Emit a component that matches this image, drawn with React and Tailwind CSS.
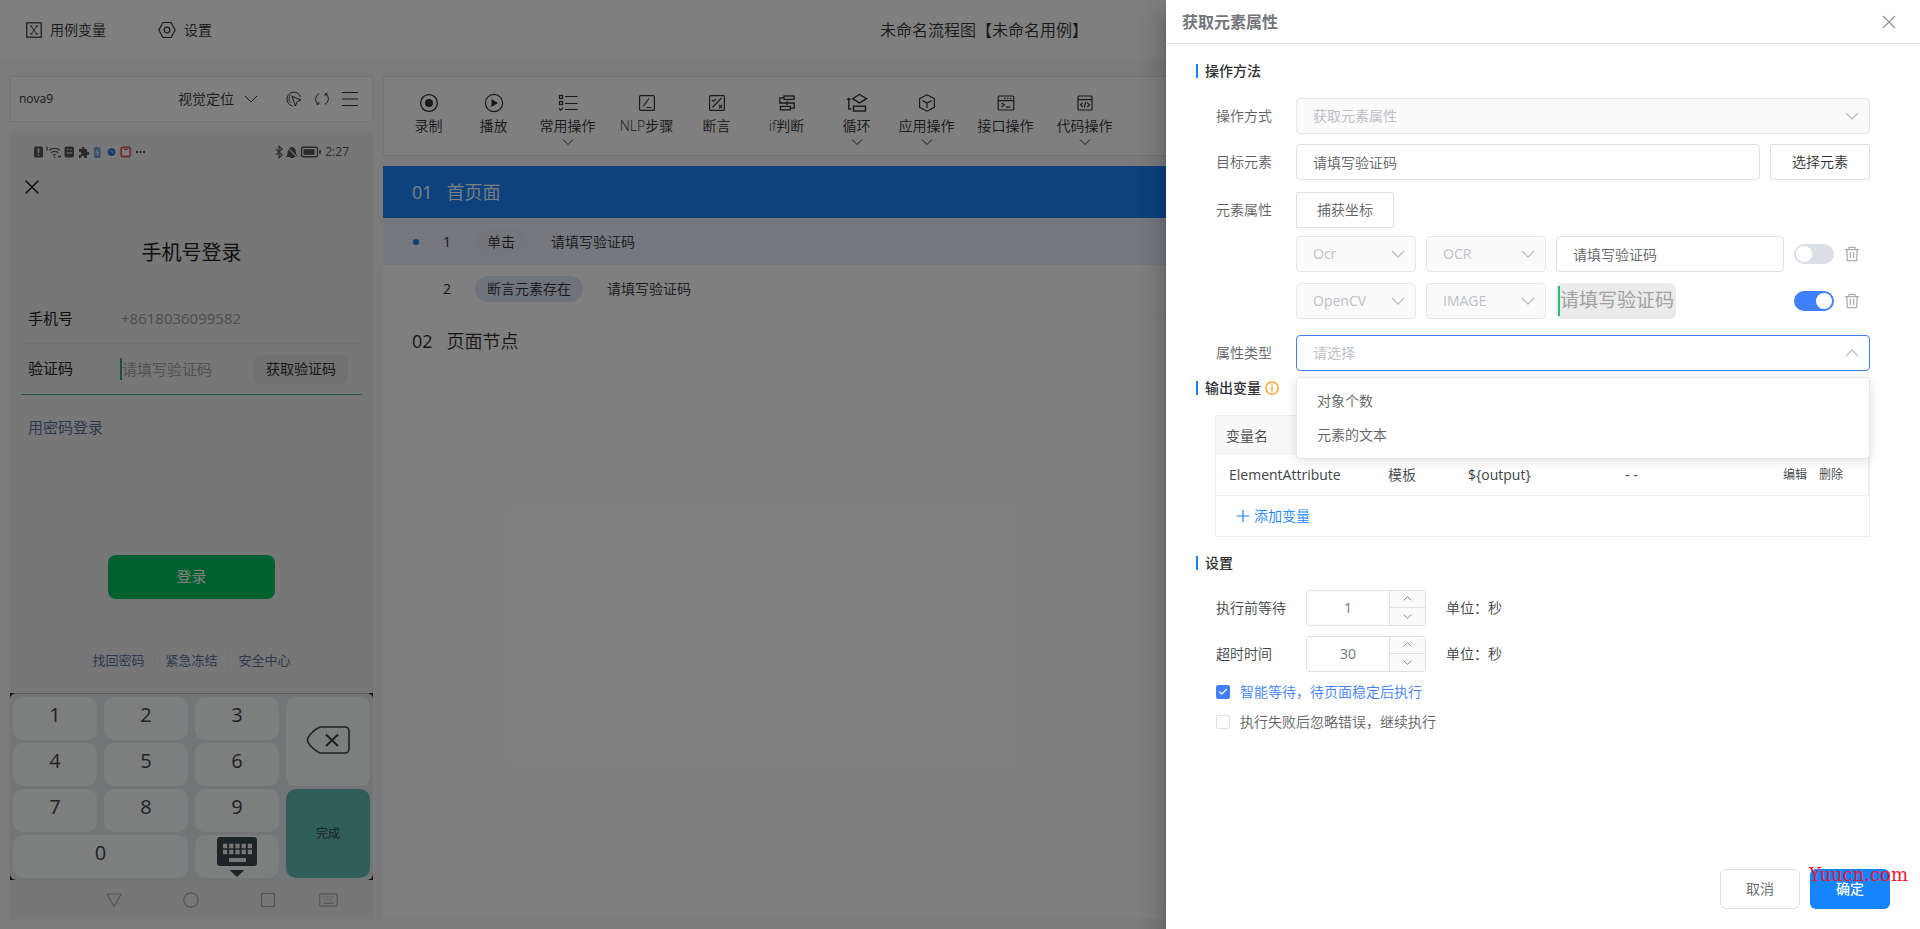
import React from "react";
import { Check } from "lucide-react";

function Svg({ w = 20, h = 20, box, className = "", children, sw = 1.2 }) {
  return (
    <svg
      width={w}
      height={h}
      viewBox={box || `0 0 ${w} ${h}`}
      fill="none"
      stroke="currentColor"
      strokeWidth={sw}
      className={"shrink-0 " + className}
      aria-hidden="true"
    >
      {children}
    </svg>
  );
}

const toolIcons = {
  record: (
    <Svg sw={1.4}>
      <circle cx="10" cy="10" r="8.4" />
      <circle cx="10" cy="10" r="4" fill="currentColor" stroke="none" />
    </Svg>
  ),
  play: (
    <Svg>
      <circle cx="10" cy="10" r="8.6" />
      <path d="M7.5 6v8l6.5-4z" fill="currentColor" stroke="none" />
    </Svg>
  ),
  list: (
    <Svg>
      <rect x="1.5" y="2.5" width="3" height="3" />
      <rect x="1.5" y="8.5" width="3" height="3" />
      <path d="M1 15.5l1.6 1.6L5 14.8M7 3.5h12.5M7 10.5h12.5M7 16.5h12.5" />
    </Svg>
  ),
  nlp: (
    <Svg>
      <rect x="2.6" y="2.6" width="14.8" height="14.8" rx="1" />
      <path d="M6 13.5L12 5.5M9.5 14.5h5" />
    </Svg>
  ),
  assert: (
    <Svg>
      <rect x="2.6" y="2.6" width="14.8" height="14.8" rx="1" />
      <path d="M5.5 14.5L14.5 5M5 6.8l1.6 1.6L9 5.8M12 12l3 3M15 12l-3 3" />
    </Svg>
  ),
  branch: (
    <Svg sw={1.3}>
      <rect x="7" y="3" width="10" height="3.4" />
      <rect x="3.4" y="13.4" width="10" height="3.4" />
      <path d="M7 4.8H2.8v5.2h14.4v5.2h-3.8M10 8v4" />
    </Svg>
  ),
  loop: (
    <Svg w={22} h={20} sw={1.4}>
      <path d="M13.5 1.5l7 4.2-7 4.2-7-4.2z" />
      <rect x="7.5" y="13.2" width="12" height="4.8" />
      <path d="M2.8 5.5v10.5h2.4M1.2 6.8l1.6-1.4 1.6 1.4" />
    </Svg>
  ),
  cube: (
    <Svg>
      <path d="M10 1.8l7.4 3.8v8.8L10 18.2l-7.4-3.8V5.6z" />
      <path d="M5.4 7.6L10 10l4.6-2.4M10 10v5" />
    </Svg>
  ),
  terminal: (
    <Svg>
      <rect x="2.2" y="3" width="15.6" height="14" rx="1" />
      <path d="M2.2 7.6h15.6M5.6 10l2.8 2-2.8 2M10 14.2h4.5" />
      <path d="M8 5.3h1.4M11 5.3h1.4M14 5.3h1.4" />
    </Svg>
  ),
  code: (
    <Svg>
      <rect x="3" y="3" width="14" height="14" rx="1" />
      <path d="M3 6.6h14M7.8 9.6l-2.3 2.2 2.3 2.2M12.2 9.6l2.3 2.2-2.3 2.2M10.9 9l-1.8 5.6" />
    </Svg>
  ),
};

const tools = [
  ["record", "录制", false, "w-[61px]"],
  ["play", "播放", false, "w-[69px]"],
  ["list", "常用操作", true, "w-[79px]"],
  ["nlp", "NLP步骤", false, "w-[79px]"],
  ["assert", "断言", false, "w-[61px]"],
  ["branch", "if判断", false, "w-[79px]"],
  ["loop", "循环", true, "w-[61px]"],
  ["cube", "应用操作", true, "w-[79px]"],
  ["terminal", "接口操作", false, "w-[79px]"],
  ["code", "代码操作", true, "w-[79px]"],
];

function Header() {
  return (
    <header className="grid h-[60px] grid-cols-[1fr_auto_1fr] items-center bg-white px-[26px]">
      <nav className="flex items-center gap-[52px]">
        <button className="flex items-center gap-2">
          <Svg w={16} h={16}>
            <rect x="0.8" y="0.8" width="14.4" height="14.4" />
            <path d="M4.8 4l6 8M10.8 4l-5.6 8M3.6 4h3M9.4 4h2.6M3.8 12h2.8M9.4 12h2.8" strokeWidth="0.9" />
          </Svg>
          用例变量
        </button>
        <button className="flex items-center gap-2">
          <Svg w={18} h={18}>
            <path d="M5 1.5h8l4.2 7.5L13 16.5H5L0.8 9z" />
            <circle cx="9" cy="9" r="2.8" />
          </Svg>
          设置
        </button>
      </nav>
      <h1 className="ml-12 text-base">未命名流程图【未命名用例】</h1>
    </header>
  );
}

function DeviceBar() {
  return (
    <div className="flex h-[46px] items-center border border-[#e6e6e6] bg-white pr-[14px] pl-2">
      <span className="flex-1 text-xs font-normal">nova9</span>
      <button className="flex items-center gap-[10px]">
        视觉定位
        <Svg w={14} h={14} sw={1}>
          <path d="M1 4l6 6 6-6" />
        </Svg>
      </button>
      <button className="ml-7" aria-label="点选">
        <Svg w={16} h={16} sw={1}>
          <path d="M6.5 15A7 7 0 1 1 14.6 6" />
          <path d="M6 5.2l9 3.8-3.8 1.5L9.3 15z" />
          <path d="M4.8 11.5A4.6 4.6 0 0 1 5 4" strokeWidth="0.8" />
        </Svg>
      </button>
      <button className="ml-3" aria-label="刷新">
        <Svg w={16} h={16} sw={1}>
          <path d="M5 2.6A6.3 6.3 0 0 0 4.2 13.2M11 13.4A6.3 6.3 0 0 0 11.8 2.8" />
          <path d="M2.4 13.2h2.4v-2.4M13.6 2.8h-2.4v2.4" />
        </Svg>
      </button>
      <button className="ml-3" aria-label="菜单">
        <Svg w={16} h={16}>
          <path d="M0 1.5h16M0 8h16M0 14.5h16" />
        </Svg>
      </button>
    </div>
  );
}

function StatusBar() {
  return (
    <div className="flex h-10 items-center justify-between px-6 text-[#555]">
      <Svg w={112} h={14} sw={1}>
        <rect x="0" y="1.5" width="9" height="11" rx="1.5" fill="#555" stroke="none" />
        <path d="M4.5 3.5v4.5M4.5 9.2v1.6" stroke="#eee" strokeWidth="1.6" />
        <path d="M13 1.5v4M15 5.2a9 9 0 0 1 11 0M17 7.8a6 6 0 0 1 7.2 0M18.8 10a3 3 0 0 1 3 0" strokeWidth="1.3" />
        <path d="M24 11.5h3M20 12.2h1.2" strokeWidth="1.6" />
        <rect x="30.5" y="1.5" width="9.5" height="11" rx="2" fill="#555" stroke="none" />
        <path d="M32.5 8h6M33 4.6h1.6M36 4.6h1.6" stroke="#eee" />
        <path
          d="M45 4h2.6a1.6 1.6 0 1 1 3 0H53v3a1.6 1.6 0 1 1 0 2.8V13h-3a1.5 1.5 0 1 0-2.6 0H45v-3.2a1.6 1.6 0 1 0 0-2.8z"
          fill="#555"
          stroke="none"
        />
        <rect x="60" y="2" width="6.5" height="11" rx="1.5" fill="#6fa3dc" stroke="none" />
        <path d="M63.6 4.6L62 7.8h2.6L63 10.8" stroke="#fff" />
        <rect x="72.5" y="2" width="10" height="10" rx="2" fill="#fff" stroke="none" />
        <circle cx="77.5" cy="7" r="4" fill="#2e7be0" stroke="none" />
        <path d="M75 5.5l3 .8 1.6 3" stroke="#cfe2ff" strokeWidth="0.7" />
        <rect x="87.2" y="2.5" width="9" height="9" rx="1.5" fill="#fff" stroke="#e05a62" strokeWidth="1.8" />
        <path d="M90 4.5h3.5" stroke="#e05a62" />
        <path d="M102 7h2M105.5 7h2M109 7h2" strokeWidth="1.8" />
      </Svg>
      <div className="flex items-center gap-1">
        <Svg w={46} h={14} sw={1.1}>
          <path d="M1 4l6 6-3 3V1l3 3-6 6" />
          <path d="M12 11.5c1.2-1.2 1-4 1.4-5.4C14 3.5 15 3 17 2.6c2 .4 3 1.6 3.2 4 .2 2 .3 3.6 1.6 4.9zM15.4 12.5h3.2" fill="#555" />
          <path d="M12 2.2l10 10" stroke="#eee" strokeWidth="1.2" />
          <rect x="26.5" y="2.2" width="16" height="9.6" rx="2" strokeWidth="1.4" />
          <rect x="28.5" y="4.2" width="11" height="5.6" fill="#555" stroke="none" />
          <path d="M45 5v4" strokeWidth="1.6" />
        </Svg>
        <span className="text-xs">2:27</span>
      </div>
    </div>
  );
}

function Key({ children, className = "", label }) {
  return (
    <button
      aria-label={label}
      className={
        "flex items-center justify-center rounded-[10px] text-[#3a4548] " +
        (className || "bg-[#fafefd]")
      }
    >
      {children}
    </button>
  );
}

function Digit({ n, className }) {
  return (
    <Key className={className}>
      <span className="pb-2 text-xl leading-6">{n}</span>
    </Key>
  );
}

function Phone() {
  return (
    <section className="flex flex-1 flex-col bg-[#eeeeee] text-[15px] font-normal text-[#222]">
      <StatusBar />
      <button className="ml-[14px] flex h-[30px] w-4 items-center" aria-label="关闭">
        <Svg w={16} h={16} sw={1.5}>
          <path d="M1.5 1.5l13 13M14.5 1.5l-13 13" />
        </Svg>
      </button>
      <h2 className="flex h-[93px] items-center justify-center pt-2 text-xl">手机号登录</h2>
      <div className="mx-[11px] flex h-[49px] items-center border-b border-[#e4e4e4] pl-[7px]">
        <label htmlFor="tel" className="w-[93px]">
          手机号
        </label>
        <input id="tel" className="w-0 flex-1 text-[#9a9a9a]" defaultValue="+8618036099582" />
      </div>
      <div className="mx-[11px] flex h-[51px] items-center border-b border-[#3cbf85] pr-[14px] pl-[7px]">
        <label htmlFor="sms" className="w-[92px]">
          验证码
        </label>
        <input
          id="sms"
          className="h-[22px] w-0 flex-1 border-l-2 border-[#2fa870] placeholder:text-[#a4a4a4]"
          placeholder="请填写验证码"
        />
        <button className="h-[29px] rounded-lg bg-[#e2e2e2] px-3 text-sm text-[#333]">获取验证码</button>
      </div>
      <a href="#password" className="flex h-[66px] items-center pl-[18px] text-[#5b6f9e]">
        用密码登录
      </a>
      <div className="flex-1" />
      <button className="mx-auto h-11 w-[167px] shrink-0 rounded-lg bg-[#07c160] text-white">登录</button>
      <div className="mt-[51px] mb-[23px] flex h-5 items-center justify-center text-[13px] text-[#5b6f9e]">
        <a href="#find" className="px-[10px]">
          找回密码
        </a>
        <a href="#freeze" className="border-x border-[#e4e4e4] px-[10px]">
          紧急冻结
        </a>
        <a href="#safe" className="px-[10px]">
          安全中心
        </a>
      </div>
      <div className="bg-[#222]">
        <div className="grid grid-cols-4 grid-rows-[repeat(4,43px)] gap-x-[7px] gap-y-[3px] rounded-md border-t border-[#bbb] bg-[#e8eaf0] px-[3px] pt-[3px] pb-[2px]">
          <Digit n="1" />
          <Digit n="2" />
          <Digit n="3" />
          <Key label="退格" className="row-span-2 bg-[#fafefd]">
            <Svg w={44} h={28} sw={1.6} className="mb-1">
              <path d="M14 1h25a4 4 0 0 1 4 4v18a4 4 0 0 1-4 4H14C9 25 1.5 18 1.5 14S9 3 14 1z" />
              <path d="M20 8.5l12 11.5M32 8.5L20 20" strokeWidth="2" />
            </Svg>
          </Key>
          <Digit n="4" />
          <Digit n="5" />
          <Digit n="6" />
          <Digit n="7" />
          <Digit n="8" />
          <Digit n="9" />
          <Key className="row-span-2 bg-[#5ebbb0]">
            <span className="text-xs">完成</span>
          </Key>
          <Digit n="0" className="col-span-2 bg-[#fafefd]" />
          <Key label="收起键盘" className="bg-[#fafefd]">
            <Svg w={42} h={42}>
              <rect x="1" y="1" width="40" height="29" rx="3" fill="#39484f" stroke="none" />
              <path d="M7 10h29M7 16h29" stroke="#eee" strokeWidth="4.4" strokeDasharray="4.2 2" />
              <path d="M13 24h17" stroke="#eee" strokeWidth="4" />
              <path d="M13.5 34h15L21 41z" fill="#39484f" stroke="none" />
            </Svg>
          </Key>
        </div>
      </div>
      <div className="flex h-[39px] items-center gap-[61px] pl-24 text-[#a8a8a8]">
        <Svg w={16} h={16}>
          <path d="M1 2h14L8 14.5z" />
        </Svg>
        <Svg w={16} h={16}>
          <circle cx="8" cy="8" r="7.2" />
        </Svg>
        <Svg w={16} h={16}>
          <rect x="1.5" y="1.5" width="13" height="13" />
        </Svg>
        <Svg w={19} h={14} className="-ml-[18px]">
          <rect x="0.8" y="0.8" width="17.4" height="12.4" rx="1" />
          <path d="M3.5 4h12M5 7h9" strokeDasharray="2 1" />
          <path d="M4.5 10.2h10" />
        </Svg>
      </div>
    </section>
  );
}

function Toolbar() {
  return (
    <div className="flex h-20 items-start border border-[#e6e6e6] bg-white px-[14px] pt-4">
      {tools.map(([icon, name, more, width]) => (
        <button key={name} className={"flex shrink-0 flex-col items-center " + width}>
          {toolIcons[icon]}
          <span className="mt-[3px] leading-5">{name}</span>
          {more && (
            <Svg w={12} h={12} sw={1}>
              <path d="M1 3.5l5 5 5-5" />
            </Svg>
          )}
        </button>
      ))}
    </div>
  );
}

function Steps() {
  return (
    <section className="flex-1 bg-white">
      <h2 className="flex h-[52px] items-center gap-[14px] bg-[#1a84ff] pl-[29px] text-lg text-white">
        <span className="font-normal">01</span>首页面
      </h2>
      <ol>
        <li className="flex h-[47px] items-center bg-[#ebf1ff] pl-[30px]">
          <span className="size-[6px] rounded-full bg-[#1a84ff]" />
          <span className="w-[56px] text-center font-normal">1</span>
          <span className="h-[26px] rounded-full bg-[#e8edf7] px-3 leading-[26px]">单击</span>
          <span className="ml-6">请填写验证码</span>
        </li>
        <li className="flex h-[49px] items-center border-b border-[#f8f8f8] pl-9">
          <span className="w-[56px] text-center font-normal">2</span>
          <span className="h-[26px] rounded-full bg-[#dfe6f7] px-3 leading-[26px]">断言元素存在</span>
          <span className="ml-6">请填写验证码</span>
        </li>
      </ol>
      <h2 className="flex h-[54px] items-center gap-[14px] pl-[29px] text-lg">
        <span className="font-normal">02</span>页面节点
      </h2>
    </section>
  );
}

function Section({ children }) {
  return (
    <h3 className="flex h-5 items-center gap-[7px] font-medium text-[#303133]">
      <span className="h-[14px] w-[2px] bg-[#1684fc]" />
      {children}
    </h3>
  );
}

function Chevron({ up = false, size = "", sw = 1.4 }) {
  return (
    <svg viewBox="0 0 14 14" fill="none" stroke="currentColor" strokeWidth={sw} className={size} aria-hidden="true">
      <path d={up ? "M1 10l6-6 6 6" : "M1 4l6 6 6-6"} />
    </svg>
  );
}

function Select({ id, label, value, className = "", open = false, children }) {
  return (
    <div className={"relative flex items-center " + className}>
      <select
        id={id}
        aria-label={label}
        disabled={!open}
        className={
          "h-9 w-full appearance-none rounded border px-4 font-normal text-[#bcc0c9] opacity-100 outline-none " +
          (open ? "border-[#407ffc] bg-white" : "border-[#e4e7ed] bg-[#fafafa]")
        }
      >
        <option>{value}</option>
      </select>
      <span className="pointer-events-none absolute right-[11px] text-[#bcc0c9]">
        <Chevron up={open} size="size-[14px]" />
      </span>
      {children}
    </div>
  );
}

function Trash() {
  return (
    <button aria-label="删除定位" className="mr-[10px] text-[#adadad]">
      <Svg w={16} h={16} sw={1.3}>
        <path d="M1 3.6h14M5 3.4V1.4h6v2M2.8 3.6l.6 11h9.2l.6-11M6.4 6v6M9.6 6v6" />
      </Svg>
    </button>
  );
}

function Switch({ on, label }) {
  return (
    <input
      type="checkbox"
      role="switch"
      aria-label={label}
      defaultChecked={on}
      className="h-5 w-10 shrink-0 appearance-none rounded-full bg-[#dcdfe6] before:m-[2px] before:block before:size-4 before:rounded-full before:bg-white checked:bg-[#407ffc] checked:before:ml-[22px]"
    />
  );
}

function NumberRow({ id, label, value, className }) {
  return (
    <div className={"flex items-center text-[#404347] " + className}>
      <label htmlFor={id} className="w-[90px]">
        {label}
      </label>
      <div className="flex h-9 w-[120px] overflow-hidden rounded border border-[#dcdfe6]">
        <input
          id={id}
          type="number"
          defaultValue={value}
          className="w-0 flex-1 appearance-none text-center font-normal text-[#76787c] outline-none [-moz-appearance:textfield] [&::-webkit-inner-spin-button]:appearance-none"
        />
        <div className="flex w-9 flex-col border-l border-[#dcdfe6] bg-[#fafafa] text-[#7c7f85]">
          <button aria-label="增加" className="flex flex-1 items-center justify-center border-b border-[#dcdfe6]">
            <Chevron up size="size-[9px]" sw={1.4} />
          </button>
          <button aria-label="减少" className="flex flex-1 items-center justify-center">
            <Chevron size="size-[9px]" sw={1.4} />
          </button>
        </div>
      </div>
      <span className="ml-5">单位：秒</span>
    </div>
  );
}

function CheckRow({ checked, children }) {
  return (
    <label className={"mt-[10px] flex h-5 items-center gap-[10px] " + (checked ? "text-[#407ffc]" : "text-[#606266]")}>
      <span className="grid size-[14px]">
        <input
          type="checkbox"
          defaultChecked={checked}
          className="size-[14px] appearance-none rounded-[2px] border border-[#dcdfe6] bg-white [grid-area:1/1] checked:border-[#407ffc] checked:bg-[#407ffc]"
        />
        {checked && <Check className="m-[2px] size-[10px] text-white [grid-area:1/1]" strokeWidth={3} />}
      </span>
      {children}
    </label>
  );
}

const textInput = "h-9 w-0 flex-1 rounded border border-[#dcdfe6] bg-white px-4 text-[#606266] outline-none";

function Drawer() {
  return (
    <aside className="absolute inset-y-0 right-0 flex w-[754px] flex-col bg-white text-[#606266] shadow-[0_8px_10px_-5px_rgba(0,0,0,0.2),0_16px_24px_2px_rgba(0,0,0,0.14),0_6px_30px_5px_rgba(0,0,0,0.12)]">
      <header className="flex h-11 items-center justify-between border-b border-[#e4e4ec] pr-6 pl-4 text-[#72767b]">
        <h2 className="text-base font-semibold">获取元素属性</h2>
        <button aria-label="关闭" className="text-[#8a8d92]">
          <Svg w={14} h={14} sw={1.1}>
            <path d="M1 1l12 12M13 1L1 13" />
          </Svg>
        </button>
      </header>

      <div className="flex flex-1 flex-col pt-[17px] pl-[30px]">
        <Section>操作方法</Section>
        <div className="mt-[17px] mr-[50px] ml-5 flex flex-col">
          <div className="flex items-center">
            <label htmlFor="method" className="w-20">
              操作方式
            </label>
            <Select id="method" value="获取元素属性" className="flex-1" />
          </div>
          <div className="mt-[10px] flex items-center">
            <label htmlFor="target" className="w-20">
              目标元素
            </label>
            <input id="target" className={textInput} defaultValue="请填写验证码" />
            <button className="ml-[10px] h-9 w-[100px] rounded-[2px] border border-[#dcdfe6] text-[#303133]">
              选择元素
            </button>
          </div>
          <div className="mt-3 flex items-center">
            <span className="w-20">元素属性</span>
            <button className="h-9 w-[98px] rounded-[2px] border border-[#dcdfe6]">捕获坐标</button>
          </div>
          <div className="mt-2 ml-20 flex items-center gap-[10px]">
            <Select label="识别引擎一" value="Ocr" className="w-[120px]" />
            <Select label="识别类型一" value="OCR" className="w-[120px]" />
            <input aria-label="识别文本" className={textInput} defaultValue="请填写验证码" />
            <Switch label="启用 OCR" />
            <Trash />
          </div>
          <div className="mt-[11px] ml-20 flex items-center gap-[10px]">
            <Select label="识别引擎二" value="OpenCV" className="w-[120px]" />
            <Select label="识别类型二" value="IMAGE" className="w-[120px]" />
            <div className="flex flex-1">
              <div className="flex h-9 w-[120px] items-center justify-center rounded-md bg-[#ebebeb] text-[19px] font-normal whitespace-nowrap text-[#a0a0a0]">
                <span className="h-[30px] w-[2px] bg-[#2fb878]" />
                请填写验证码
              </div>
            </div>
            <Switch label="启用 OpenCV" on />
            <Trash />
          </div>
          <div className="mt-4 flex items-center">
            <label htmlFor="attr" className="w-20">
              属性类型
            </label>
            <Select id="attr" value="请选择" className="flex-1" open>
              <ul
                role="listbox"
                className="absolute inset-x-0 top-full z-10 mt-[6px] rounded border border-[#e4e7ed] bg-white py-[6px] leading-[34px] shadow-[0_2px_12px_rgba(0,0,0,0.12)]"
              >
                <li role="option" className="px-5">
                  对象个数
                </li>
                <li role="option" className="px-5">
                  元素的文本
                </li>
              </ul>
            </Select>
          </div>
        </div>

        <div className="mt-[7px] flex items-center gap-1">
          <Section>输出变量</Section>
          <Svg w={14} h={14} className="text-[#ffb152]" sw={1.8}>
            <circle cx="7" cy="7" r="6.1" />
            <path d="M7 3.2v1.6M7 6v4.8" />
          </Svg>
        </div>
        <div className="mt-[17px] mr-[50px] ml-[19px] border border-[#ebeef2] text-[#404347]">
          <table className="w-full table-fixed border-r border-[#ebeef2] text-left">
            <colgroup>
              <col className="w-[159px]" />
              <col className="w-20" />
              <col className="w-[157px]" />
              <col className="w-[158px]" />
              <col />
            </colgroup>
            <thead className="bg-[#f8f8f9]">
              <tr className="h-[39px]">
                <th className="pl-[10px] font-[350]">变量名</th>
                <th />
                <th />
                <th />
                <th />
              </tr>
            </thead>
            <tbody>
              <tr className="h-10 border-b border-[#ebeef2]">
                <td className="pl-[13px] font-normal">ElementAttribute</td>
                <td className="pl-[13px]">模板</td>
                <td className="pl-[13px] font-normal">{"${output}"}</td>
                <td className="pl-[13px] font-normal">- -</td>
                <td className="pl-[13px] text-xs">
                  <button>编辑</button>
                  <button className="ml-3">删除</button>
                </td>
              </tr>
            </tbody>
          </table>
          <button className="ml-5 flex h-10 items-center gap-1 text-[#1684fc]">
            <Svg w={14} h={14}>
              <path d="M7 1v12M1 7h12" />
            </Svg>
            添加变量
          </button>
        </div>

        <div className="mt-4">
          <Section>设置</Section>
        </div>
        <div className="ml-5 flex flex-col items-start">
          <NumberRow id="before" label="执行前等待" value={1} className="mt-[17px]" />
          <NumberRow id="timeout" label="超时时间" value={30} className="mt-[10px]" />
          <CheckRow checked>智能等待，待页面稳定后执行</CheckRow>
          <CheckRow>执行失败后忽略错误，继续执行</CheckRow>
        </div>
      </div>

      <footer className="flex justify-end gap-[10px] pr-[30px] pb-5">
        <button className="h-10 w-20 rounded-md border border-[#dcdfe6]">取消</button>
        <button className="h-10 w-20 rounded-md bg-[#1684fc] font-medium text-white">确定</button>
      </footer>
      <span className="pointer-events-none absolute right-3 bottom-11 font-['DejaVu_Serif',serif] text-lg leading-5 text-[#f5142a]">
        Yuucn.com
      </span>
    </aside>
  );
}

export default function App() {
  return (
    <div className="relative flex min-h-screen flex-col overflow-hidden bg-[#f6f6f6] font-['Open_Sans','Noto_Sans_CJK_SC',sans-serif] text-sm font-[350] text-[#303133]">
      <Header />
      <main className="flex flex-1 gap-[10px] px-[10px] pt-4 pb-[10px]">
        <div className="flex w-[363px] shrink-0 flex-col gap-[10px]">
          <DeviceBar />
          <Phone />
        </div>
        <div className="flex min-w-0 flex-1 flex-col gap-[10px]">
          <Toolbar />
          <Steps />
        </div>
      </main>
      <div className="absolute inset-0 bg-black/50" />
      <Drawer />
    </div>
  );
}
